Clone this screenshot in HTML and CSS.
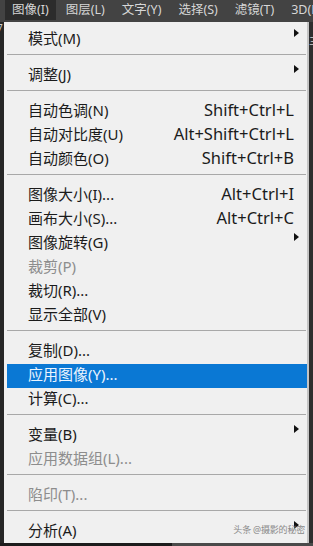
FILE: index.html
```html
<!DOCTYPE html>
<html lang="zh-CN">
<head>
    <meta charset="UTF-8">
    <title>图像菜单</title>
    <link rel="stylesheet" href="styles.css">
</head>
<body>
    <!-- Barra de menus -->
    <div class="barra">
        <span class="barra-item ativo">图像(I)</span>
        <span class="barra-item">图层(L)</span>
        <span class="barra-item">文字(Y)</span>
        <span class="barra-item">选择(S)</span>
        <span class="barra-item">滤镜(T)</span>
        <span class="barra-item">3D(D)</span>
    </div>
    <div class="area">
        <div class="lado-esq"><span class="resto">7</span></div>
        <!-- Menu aberto -->
        <div class="menu">
            <div class="item"><span class="rotulo">模式(M)</span><span class="seta"></span></div>
            <div class="sep"></div>
            <div class="item"><span class="rotulo">调整(J)</span><span class="seta"></span></div>
            <div class="sep"></div>
            <div class="item"><span class="rotulo">自动色调(N)</span><span class="atalho">Shift+Ctrl+L</span></div>
            <div class="item"><span class="rotulo">自动对比度(U)</span><span class="atalho">Alt+Shift+Ctrl+L</span></div>
            <div class="item"><span class="rotulo">自动颜色(O)</span><span class="atalho">Shift+Ctrl+B</span></div>
            <div class="sep"></div>
            <div class="item"><span class="rotulo">图像大小(I)...</span><span class="atalho">Alt+Ctrl+I</span></div>
            <div class="item"><span class="rotulo">画布大小(S)...</span><span class="atalho">Alt+Ctrl+C</span></div>
            <div class="item"><span class="rotulo">图像旋转(G)</span><span class="seta"></span></div>
            <div class="item desativado"><span class="rotulo">裁剪(P)</span></div>
            <div class="item"><span class="rotulo">裁切(R)...</span></div>
            <div class="item"><span class="rotulo">显示全部(V)</span></div>
            <div class="sep"></div>
            <div class="item"><span class="rotulo">复制(D)...</span></div>
            <div class="item selecionado"><span class="rotulo">应用图像(Y)...</span></div>
            <div class="item"><span class="rotulo">计算(C)...</span></div>
            <div class="sep"></div>
            <div class="item"><span class="rotulo">变量(B)</span><span class="seta"></span></div>
            <div class="item desativado"><span class="rotulo">应用数据组(L)...</span></div>
            <div class="sep"></div>
            <div class="item desativado"><span class="rotulo">陷印(T)...</span></div>
            <div class="sep"></div>
            <div class="item"><span class="rotulo">分析(A)</span><span class="seta"></span></div>
            <div class="marca">头条 @摄影的秘密</div>
        </div>
        <div class="lado-dir"><span class="resto">三</span></div>
    </div>
    <div class="rodape">
        <div class="rodape-escuro"></div>
        <div class="rodape-claro"></div>
    </div>
</body>
</html>
```

FILE: styles.css
```css
body {
    margin: 0;
    width: 313px;
    height: 546px;
    overflow: hidden;
    background: #2a2a2a;
    font-family: "Noto Sans", "Noto Sans CJK SC", sans-serif;
    display: flex;
    flex-direction: column;
}
.barra {
    height: 22px;
    background: #434343;
    display: flex;
    align-items: flex-start;
    gap: 3px;
    padding-left: 5px;
    white-space: nowrap;
    overflow: hidden;
}
.barra-item {
    height: 20px;
    line-height: 20px;
    padding: 0 7px;
    font-size: 12.5px;
    color: #d6d6d6;
}
.barra-item.ativo {
    background: #2c2c2c;
}
.area {
    display: flex;
    height: 521px;
}
.lado-esq {
    width: 4px;
    background: #262626;
    overflow: hidden;
}
.lado-dir {
    width: 4px;
    background: #2e2e2e;
    border-left: 2px solid #c4c4c4;
    overflow: hidden;
}
.resto {
    display: block;
    color: #cfcfcf;
    font-size: 10px;
    line-height: 10px;
    margin-top: 14px;
}
.lado-esq .resto {
    margin-top: 1px;
    margin-left: -3px;
}
.menu {
    position: relative;
    width: 303px;
    background: #f0f0f0;
    padding-top: 6px;
    box-sizing: border-box;
}
.item {
    height: 24px;
    box-sizing: border-box;
    padding-bottom: 5px;
    display: flex;
    align-items: center;
    padding-left: 24px;
    margin-left: 3px;
    font-size: 15px;
    color: #1b1b1b;
    white-space: nowrap;
}
.rotulo {
    flex: 1;
    margin-left: -3px;
}
.atalho {
    font-size: 16.5px;
    padding-right: 13px;
}
.seta {
    width: 0;
    height: 0;
    border-left: 5px solid #111;
    border-top: 4px solid transparent;
    border-bottom: 4px solid transparent;
    margin-right: 8px;
    margin-bottom: 9px;
}
.desativado {
    color: #8d8d8d;
}
.selecionado {
    background: #0a78d4;
    color: #eaf4ff;
}
.sep {
    height: 12px;
    margin: 0 1px 0 3px;
    box-sizing: border-box;
    border-top: 2px solid transparent;
    background: linear-gradient(#a8a8a8, #a8a8a8) top / 100% 1px no-repeat;
    background-origin: padding-box;
}
.marca {
    position: absolute;
    right: 2px;
    bottom: 7px;
    font-size: 9px;
    color: #8a8a8a;
    letter-spacing: -0.2px;
}
.rodape {
    flex: 1;
    display: flex;
}
.rodape-escuro {
    width: 172px;
    background: #1c1c1c;
}
.rodape-claro {
    flex: 1;
    background: #4a4a4a;
}
```
